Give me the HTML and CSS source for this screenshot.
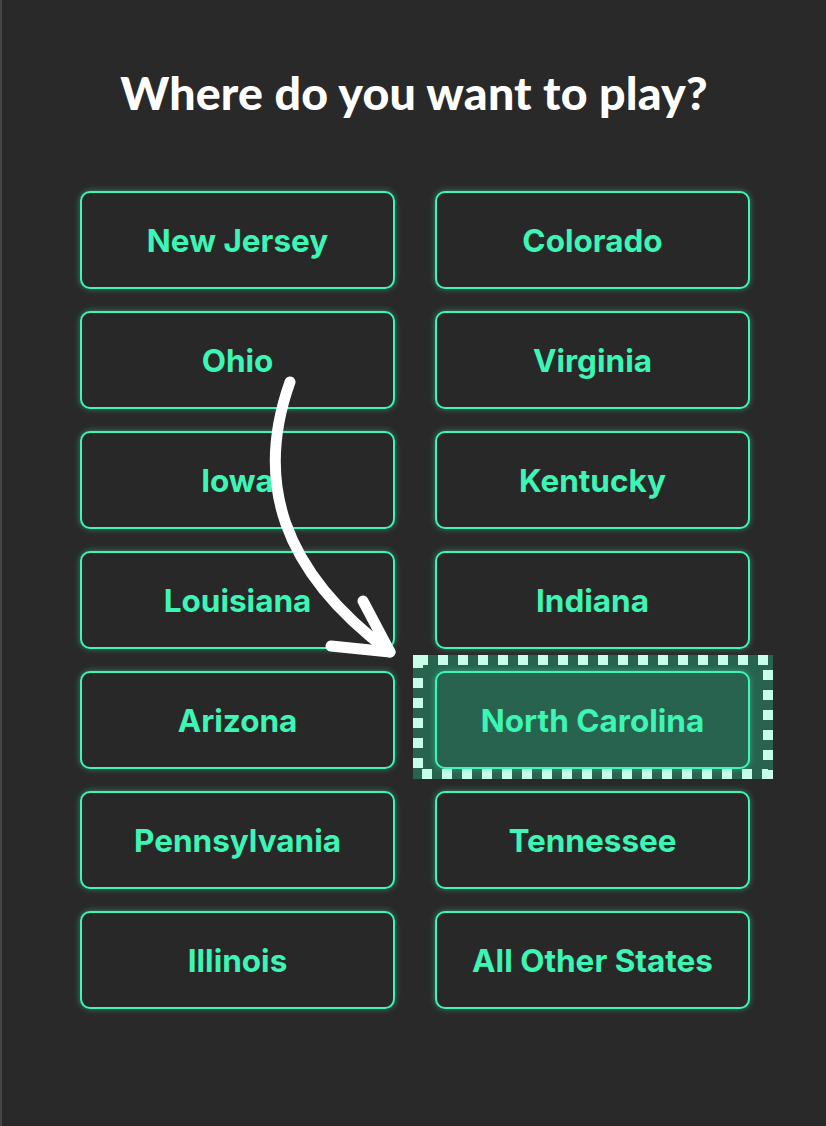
FILE: index.html
```html
<!DOCTYPE html>
<html lang="en">
<head>
<meta charset="utf-8">
<title>Where do you want to play?</title>
<link rel="stylesheet" href="styles.css">
</head>
<body>
<main class="page">
  <h1 class="title">Where do you want to play?</h1>
  <div class="grid">
    <button class="state">New Jersey</button>
    <button class="state">Colorado</button>
    <button class="state">Ohio</button>
    <button class="state">Virginia</button>
    <button class="state">Iowa</button>
    <button class="state">Kentucky</button>
    <button class="state">Louisiana</button>
    <button class="state">Indiana</button>
    <button class="state">Arizona</button>
    <div class="focus-cell">
      <svg class="focus-ring" width="360" height="124" viewBox="0 0 360 124" aria-hidden="true">
        <rect x="0" y="0" width="360" height="124" fill="#286350"/>
        <rect x="5" y="5" width="350" height="114" fill="none" stroke="#c8fde9" stroke-width="10" stroke-dasharray="10 10"/>
      </svg>
      <button class="state selected">North Carolina</button>
    </div>
    <button class="state">Pennsylvania</button>
    <button class="state">Tennessee</button>
    <button class="state">Illinois</button>
    <button class="state">All Other States</button>
  </div>
  <svg class="arrow" width="826" height="1126" viewBox="0 0 826 1126" aria-hidden="true">
    <g fill="none" stroke="#ffffff" stroke-width="11" stroke-linecap="round" stroke-linejoin="round">
      <path d="M290 382 C255 480 280 570 390 652"/>
      <path d="M363 601 L390 652 L331 646"/>
    </g>
  </svg>
</main>
</body>
</html>
```

FILE: styles.css
```css
html, body {
  margin: 0;
  padding: 0;
}
body {
  background: #282828;
  width: 826px;
  height: 1126px;
  overflow: hidden;
}
.page {
  position: relative;
  width: 824px;
  height: 1126px;
  border-left: 2px solid #474747;
  background: #292929;
}
.title {
  margin: 0;
  padding-top: 64px;
  text-align: center;
  color: #ffffff;
  font-family: "Lato", "DejaVu Sans", sans-serif;
  font-weight: 900;
  font-size: 46.5px;
  line-height: 56px;
  letter-spacing: 0.2px;
}
.grid {
  margin: 71px 0 0 78px;
  width: 670px;
  display: grid;
  grid-template-columns: 315px 315px;
  column-gap: 40px;
  row-gap: 22px;
  grid-auto-rows: 98px;
}
.state {
  box-sizing: border-box;
  width: 315px;
  height: 98px;
  margin: 0;
  padding: 0;
  border: 2px solid #3df5b4;
  border-radius: 10px;
  background: #282828;
  box-shadow: 0 0 6px rgba(61, 245, 180, 0.45);
  color: #3df5b4;
  font-family: "Inter", "Liberation Sans", sans-serif;
  font-weight: 700;
  font-size: 31.5px;
  letter-spacing: 0;
  cursor: pointer;
}
.focus-cell {
  position: relative;
}
.focus-ring {
  position: absolute;
  left: -22px;
  top: -16px;
  display: block;
}
.state.selected {
  position: relative;
  background: #286350;
}
.arrow {
  position: absolute;
  left: -2px;
  top: 0;
  pointer-events: none;
}
```
